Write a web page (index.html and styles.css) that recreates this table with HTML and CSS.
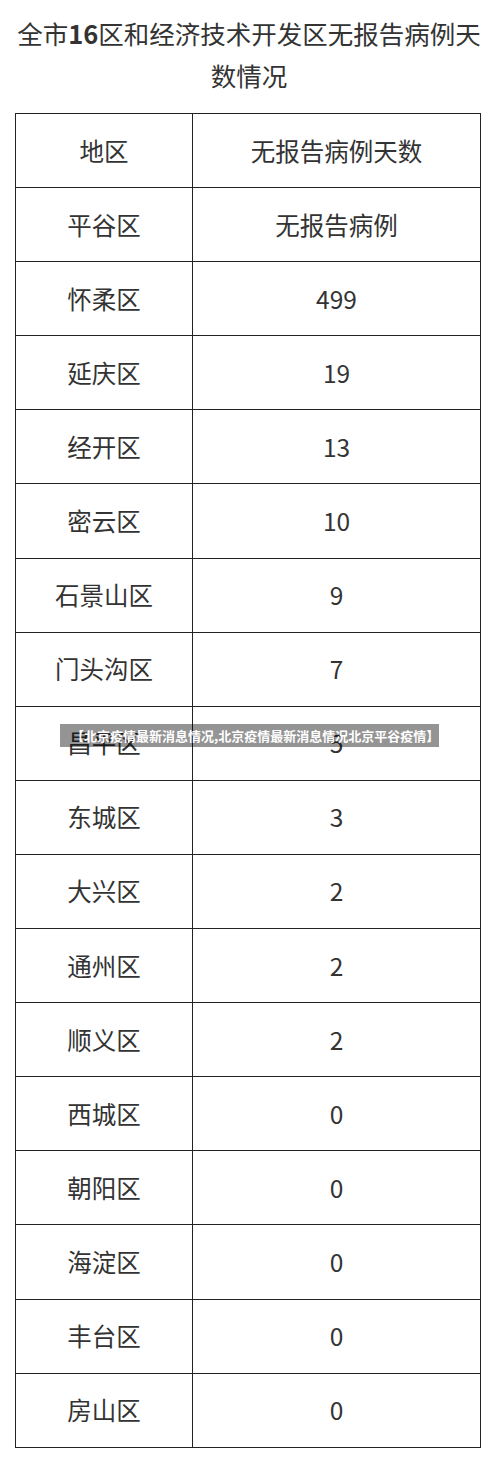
FILE: index.html
```html
<!DOCTYPE html>
<html lang="zh-CN">
<head>
<meta charset="utf-8">
<title>北京疫情</title>
<link rel="stylesheet" href="styles.css">
</head>
<body>
<div class="page">
  <h1 class="title">全市<b>16</b>区和经济技术开发区无报告病例天数情况</h1>
  <table class="data">
    <tr><td>地区</td><td>无报告病例天数</td></tr>
    <tr><td>平谷区</td><td>无报告病例</td></tr>
    <tr><td>怀柔区</td><td>499</td></tr>
    <tr><td>延庆区</td><td>19</td></tr>
    <tr><td>经开区</td><td>13</td></tr>
    <tr><td>密云区</td><td>10</td></tr>
    <tr><td>石景山区</td><td>9</td></tr>
    <tr><td>门头沟区</td><td>7</td></tr>
    <tr><td>昌平区</td><td>5</td></tr>
    <tr><td>东城区</td><td>3</td></tr>
    <tr><td>大兴区</td><td>2</td></tr>
    <tr><td>通州区</td><td>2</td></tr>
    <tr><td>顺义区</td><td>2</td></tr>
    <tr><td>西城区</td><td>0</td></tr>
    <tr><td>朝阳区</td><td>0</td></tr>
    <tr><td>海淀区</td><td>0</td></tr>
    <tr><td>丰台区</td><td>0</td></tr>
    <tr><td>房山区</td><td>0</td></tr>
  </table>
  <div class="banner">【北京疫情最新消息情况,北京疫情最新消息情况北京平谷疫情】</div>
</div>
</body>
</html>
```
FILE: styles.css
```css
html, body {
  margin: 0;
  padding: 0;
  background: #fff;
}
.page {
  position: relative;
  width: 500px;
  padding-top: 12px;
  font-family: "Noto Sans CJK SC", "Noto Sans", sans-serif;
  color: #333;
}
.title {
  margin: 0 14px 0 12px;
  font-size: 25.5px;
  font-weight: 400;
  line-height: 42px;
  text-align: center;
  color: #333;
}
.title b {
  font-weight: 700;
}
.data {
  margin: 17px 0 0 15px;
  width: 466px;
  border-collapse: collapse;
  border: 1.5px solid #222;
}
.data td {
  border: 1.5px solid #222;
  height: 73.1px;
  padding: 0;
  text-align: center;
  vertical-align: middle;
  font-size: 24.5px;
  line-height: 30px;
  color: #333;
}
.data td:first-child {
  width: 176px;
}
.banner {
  position: absolute;
  left: 60px;
  top: 724px;
  width: 379px;
  height: 23px;
  box-sizing: border-box;
  padding-left: 11px;
  background: rgba(0, 0, 0, 0.42);
  color: #fff;
  font-size: 13px;
  font-weight: 700;
  line-height: 23px;
  white-space: nowrap;
  overflow: hidden;
}
```
